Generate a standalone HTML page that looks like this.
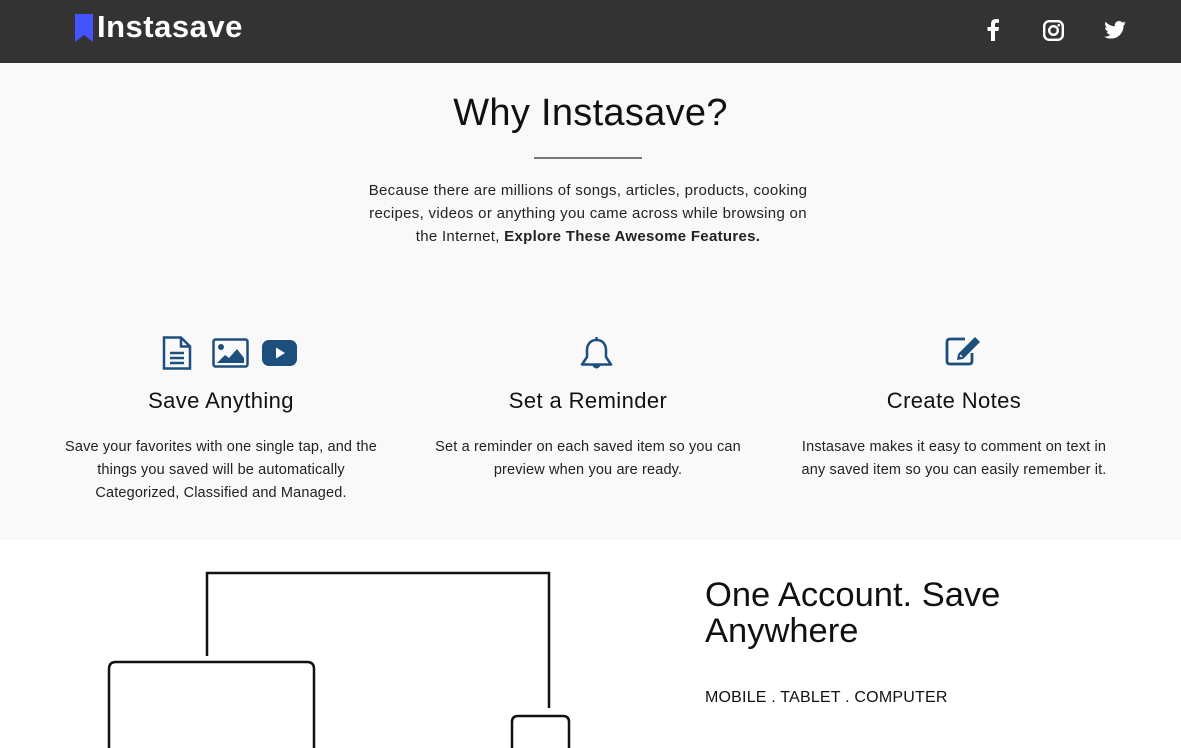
<!DOCTYPE html>
<html><head><meta charset="utf-8"><style>
*{margin:0;padding:0;box-sizing:border-box}
body{width:1181px;height:748px;overflow:hidden;background:#fff;font-family:"Liberation Sans",sans-serif;color:#111;position:relative}
.hdr{position:absolute;left:0;top:0;width:1181px;height:63px;background:#333}
.logo{position:absolute;left:74px;top:10px;color:#fff;font-weight:bold;font-size:31px;letter-spacing:0.5px}
.logo svg{position:absolute;left:0;top:3px}
.logo span{position:absolute;left:23px;top:-1px;white-space:nowrap}
.sec{position:absolute;left:0;top:63px;width:1181px;height:477px;background:#f9f9f9}
h1{position:absolute;top:92px;width:1181px;text-align:center;font-weight:normal;font-size:38px;left:0;letter-spacing:0.3px}
.rule{position:absolute;left:534px;top:157px;width:108px;height:2px;background:#777}
.intro{position:absolute;left:363px;top:179px;width:450px;text-align:center;font-size:15px;line-height:23px;color:#222;letter-spacing:0.3px}
.col{position:absolute;top:388px;width:360px;text-align:center}
.col h3{font-weight:normal;font-size:22px;height:48px;letter-spacing:0.4px}
.col p{font-size:14.5px;line-height:23px;color:#222;width:340px;margin:0 auto;letter-spacing:0.15px}
.ic{position:absolute}
h2{position:absolute;left:705px;top:577px;font-weight:normal;font-size:34.5px;line-height:36px}
.dev{position:absolute;left:705px;top:689px;font-size:16px;letter-spacing:0.2px}
</style></head><body>
<div class="hdr">
 <div class="logo"><svg width="20" height="30" viewBox="0 0 20 30"><path d="M1 1H19V29L10 22L1 29Z" fill="#4353ff"/></svg><span>Instasave</span></div>
 <svg style="position:absolute;left:986px;top:19px" width="14" height="22" viewBox="0 0 14 22"><path d="M9 22V12H12.5L13 8H9V5.5C9 4.5 9.4 3.8 11 3.8H13V0.3C12.5 0.2 11.3 0 10 0 7 0 5 1.8 5 5V8H1.5V12H5V22Z" fill="#fff"/></svg>
 <svg style="position:absolute;left:1043px;top:20px" width="21" height="21" viewBox="0 0 21 21"><rect x="1.2" y="1.2" width="18.6" height="18.6" rx="5" fill="none" stroke="#fff" stroke-width="2.4"/><circle cx="10.5" cy="10.5" r="4.3" fill="none" stroke="#fff" stroke-width="2.4"/><circle cx="15.8" cy="5.2" r="1.3" fill="#fff"/></svg>
 <svg style="position:absolute;left:1104px;top:21px" width="22" height="18" viewBox="0 0 24 20"><path d="M24 2.4c-.9.4-1.8.6-2.8.8 1-.6 1.8-1.6 2.2-2.700-1 .6-2 1-3.1 1.2C19.3.7 18 0 16.6 0c-2.7 0-4.9 2.200-4.9 4.900 0 .4 0 .8.1 1.100C7.700 5.800 4.100 3.900 1.700.9c-.4.7-.7 1.600-.7 2.500 0 1.700.9 3.200 2.200 4.100-.8 0-1.600-.2-2.200-.6v.1c0 2.400 1.700 4.400 3.900 4.800-.4.1-.8.2-1.300.2-.3 0-.6 0-.9-.1.6 2 2.400 3.400 4.600 3.400-1.700 1.300-3.800 2.100-6.100 2.100-.4 0-.8 0-1.200-.1 2.200 1.400 4.800 2.200 7.500 2.200 9.100 0 14-7.500 14-14v-.6c1-.7 1.800-1.600 2.500-2.500z" fill="#fff"/></svg>
</div>
<div class="sec"></div>
<h1>Why Instasave?</h1>
<div class="rule"></div>
<div class="intro">Because there are millions of songs, articles, products, cooking recipes, videos or anything you came across while browsing on the Internet, <b>Explore These Awesome Features.</b></div>

<svg class="ic" style="left:162px;top:336px" width="30" height="34" viewBox="0 0 30 34"><path d="M2 1.5H19L28 10.5V32.5H2Z" fill="none" stroke="#1d4f7c" stroke-width="2.5"/><path d="M19 1.5V10.5H28" fill="none" stroke="#1d4f7c" stroke-width="2.5"/><path d="M8 17H22M8 22H22M8 27H22" stroke="#1d4f7c" stroke-width="2.5"/></svg>
<svg class="ic" style="left:212px;top:338px" width="37" height="30" viewBox="0 0 37 30"><rect x="1.5" y="1.5" width="34" height="27" rx="2" fill="none" stroke="#1d4f7c" stroke-width="2.5"/><circle cx="9" cy="9" r="3" fill="#1d4f7c"/><path d="M5 25L13 17L17 20L25 11L32 20V25Z" fill="#1d4f7c"/></svg>
<svg class="ic" style="left:262px;top:340px" width="35" height="26" viewBox="0 0 35 26"><rect x="0" y="0" width="35" height="26" rx="7" fill="#1d4f7c"/><path d="M14 7.5L23 13L14 18.5Z" fill="#fff"/></svg>
<svg class="ic" style="left:580px;top:335px" width="33" height="37" viewBox="0 0 33 37"><path d="M16.5 2V5M16.5 5C10 5 7 10 7 15V22L2 29.5H31L26 22V15C26 10 23 5 16.5 5Z" fill="none" stroke="#1d4f7c" stroke-width="2.5" stroke-linejoin="round"/><path d="M12 30Q16.5 37 21 30" fill="#1d4f7c"/></svg>
<svg class="ic" style="left:945px;top:336px" width="36" height="30" viewBox="0 0 36 30"><path d="M20 3H5Q2 3 2 6V25Q2 28 5 28H24Q27 28 27 25V17" fill="none" stroke="#1d4f7c" stroke-width="2.8"/><path d="M30 1L35 6L18 23L12 24L13 18Z" fill="#1d4f7c"/><path d="M15 19L17 21" stroke="#fff" stroke-width="1.5"/></svg>

<div class="col" style="left:41px"><h3>Save Anything</h3><p style="width:322px">Save your favorites with one single tap, and the things you saved will be automatically Categorized, Classified and Managed.</p></div>
<div class="col" style="left:408px"><h3>Set a Reminder</h3><p style="width:330px">Set a reminder on each saved item so you can preview when you are ready.</p></div>
<div class="col" style="left:774px"><h3>Create Notes</h3><p style="width:330px">Instasave makes it easy to comment on text in any saved item so you can easily remember it.</p></div>

<svg class="ic" style="left:0;top:540px" width="700" height="208" viewBox="0 540 700 208"><g fill="none" stroke="#111" stroke-width="2.5"><path d="M207 656V573H549V708"/><path d="M109 760V669Q109 662 116 662H307Q314 662 314 669V760"/><path d="M512 760V722Q512 716 518 716H563Q569 716 569 722V760"/></g></svg>
<h2>One Account. Save<br>Anywhere</h2>
<div class="dev">MOBILE . TABLET . COMPUTER</div>
</body></html>
